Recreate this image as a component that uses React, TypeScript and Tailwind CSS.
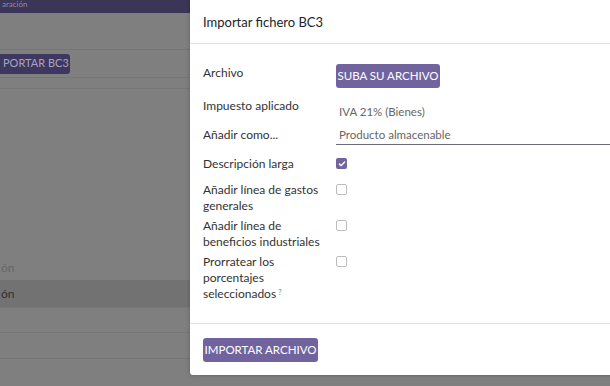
import { Check } from "lucide-react";

function Row({ label, children }: { label: React.ReactNode; children?: React.ReactNode }) {
  return (
    <div className="flex items-start">
      <div className="w-[133px] shrink-0 leading-4 text-[12px] text-[#333]">{label}</div>
      <div className="flex-1">{children}</div>
    </div>
  );
}

function Box({ checked }: { checked?: boolean }) {
  return checked ? (
    <div className="mt-[2px] w-[11px] h-[11px] rounded-[2px] bg-[#71639e] flex items-center justify-center">
      <Check size={8} strokeWidth={4} className="text-white" />
    </div>
  ) : (
    <div className="mt-[2px] w-[11px] h-[11px] rounded-[2px] border border-[#bdbdbd] bg-white" />
  );
}

export default function App() {
  return (
    <div className="relative w-[610px] h-[386px] overflow-hidden bg-[#7f7f7f] font-['Lato',sans-serif]">
      {/* dimmed page behind */}
      <div className="h-[13px] bg-[#3b3558] text-[8px] text-[#8f8aa6] leading-[9px] pl-[2px] whitespace-nowrap">
        aración
      </div>
      <div className="h-[37px] border-b border-[#767676]" />
      <div className="h-[28px] flex items-center border-b border-[#767676]">
        <div className="h-[20px] w-[70px] rounded-r-[3px] bg-[#3e3860] text-[#a8a3c0] text-[11px] flex items-center pl-[3px] whitespace-nowrap">
          PORTAR BC3
        </div>
      </div>
      <div className="h-[11px] border-b border-[#767676]" />
      <div className="h-[166px]" />
      <div className="h-[25px] text-[12px] text-[#666] flex items-center">
        <span className="pl-[1px]">ón</span>
      </div>
      <div className="h-[28px] bg-[#727272] flex items-center text-[12px] text-[#2f2f2f] border-b border-[#777]">
        <span className="pl-[1px]">ón</span>
      </div>
      <div className="h-[25px] border-b border-[#767676]" />
      <div className="h-[26px] border-b border-[#767676]" />

      {/* modal */}
      <div className="absolute left-[190px] top-[-20px] w-[440px] h-[395px] bg-white rounded-[3px] shadow-[0_0_4px_rgba(0,0,0,0.25)] flex flex-col">
        <div className="h-[64px] border-b border-[#dee2e6] flex items-end pb-[11px] px-[13px]">
          <span className="text-[13px] text-[#212529]">Importar fichero BC3</span>
        </div>
        <div className="flex-1 px-[13px] pt-[20px] flex flex-col">
          <Row label={<span className="block mt-[1px]">Archivo</span>}>
            <div className="h-[24px] w-[104px] rounded-[3px] bg-[#71639e] text-white text-[11.5px] flex items-center justify-center">
              SUBA SU ARCHIVO
            </div>
          </Row>
          <div className="h-[10px]" />
          <Row label="Impuesto aplicado">
            <span className="ml-[3px] text-[11.5px] text-[#666]">IVA 21% (Bienes)</span>
          </Row>
          <div className="h-[5px]" />
          <Row label="Añadir como...">
            <div className="border-b border-[#6b6b7a] pb-[1px] pl-[3px] text-[11.5px] text-[#666] leading-4 mr-[-20px]">
              Producto almacenable
            </div>
          </Row>
          <div className="h-[11px]" />
          <Row label="Descripción larga">
            <Box checked />
          </Row>
          <div className="h-[10px]" />
          <Row label="Añadir línea de gastos generales">
            <Box />
          </Row>
          <div className="h-[4px]" />
          <Row label="Añadir línea de beneficios industriales">
            <Box />
          </Row>
          <div className="h-[4px]" />
          <Row
            label={
              <>
                Prorratear los porcentajes seleccionados
                <sup className="text-[7px] text-[#17a2b8] ml-[2px]">?</sup>
              </>
            }
          >
            <Box />
          </Row>
        </div>
        <div className="h-[52px] border-t border-[#dee2e6] px-[13px] flex items-center">
          <div className="h-[24px] w-[115px] rounded-[3px] bg-[#71639e] text-white text-[11.5px] flex items-center justify-center">
            IMPORTAR ARCHIVO
          </div>
        </div>
      </div>
    </div>
  );
}
